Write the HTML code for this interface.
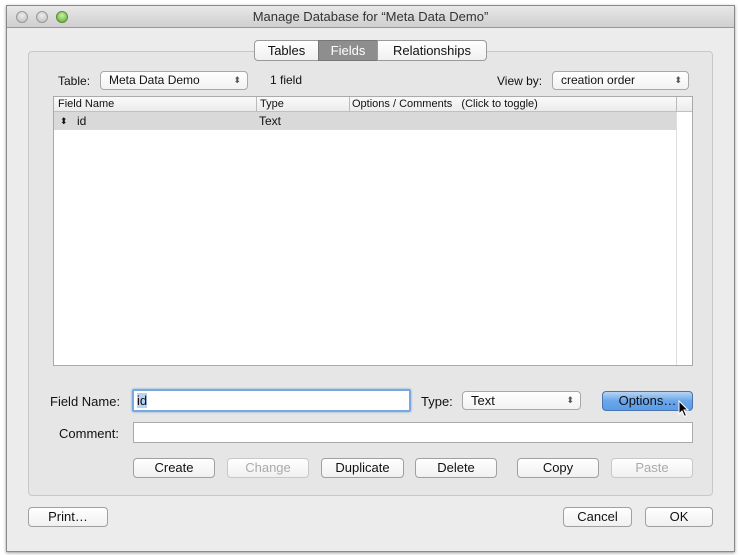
<!DOCTYPE html>
<html><head><style>
*{box-sizing:border-box;margin:0;padding:0}
body{width:740px;height:555px;background:#fff;font-family:"Liberation Sans",sans-serif;font-size:12px;color:#111;position:relative;overflow:hidden}
.a{position:absolute}
.win{left:6px;top:5px;width:729px;height:547px;border:1px solid #8a8a8a;background:#ececec;box-shadow:0 1px 3px rgba(0,0,0,.4)}
.title{left:7px;top:6px;width:727px;height:22px;background:linear-gradient(#e8e8e8,#cfcfcf);border-bottom:1px solid #999;text-align:center;line-height:22px;font-size:13px;color:#333}
.dot{width:12px;height:12px;border-radius:50%;top:11px;background:radial-gradient(circle at 50% 35%,#eee,#b8b8b8);border:1px solid #999}
.group{left:28px;top:51px;width:685px;height:445px;border:1px solid #c8c8c8;border-radius:4px;background:#e6e6e6}
.tab{top:40px;height:21px;border:1px solid #9a9a9a;background:linear-gradient(#fff,#f0f0f0);text-align:center;line-height:19px;font-size:13px}
.pop{height:19px;border:1px solid #a8a8a8;border-radius:4px;background:linear-gradient(#fff,#f2f2f2);padding-left:8px;line-height:17px;font-size:12px}
.pop:after{content:"⬍";position:absolute;right:6px;top:0;font-size:9px;color:#555}
.btn{height:20px;border:1px solid #a0a0a0;border-radius:4px;background:linear-gradient(#fff,#f0f0f0);text-align:center;line-height:18px;font-size:13px}
.dis{color:#aaa;border-color:#c8c8c8}
.inp{background:#fff;border:1px solid #aaa}
</style></head><body>
<div class="a win"></div>
<div class="a title">Manage Database for “Meta Data Demo”</div>
<div class="a dot" style="left:16px"></div>
<div class="a dot" style="left:36px"></div>
<div class="a dot" style="left:56px;background:radial-gradient(circle at 50% 35%,#c8f0a0,#5aaa30);border-color:#5a8a3a"></div>
<div class="a group"></div>
<div class="a tab" style="left:254px;width:65px;border-radius:4px 0 0 4px">Tables</div>
<div class="a tab" style="left:318px;width:60px;background:#8e8e8e;color:#fff;border-color:#777">Fields</div>
<div class="a tab" style="left:377px;width:110px;border-radius:0 4px 4px 0">Relationships</div>
<div class="a" style="left:58px;top:74px">Table:</div>
<div class="a pop" style="left:100px;top:71px;width:148px">Meta Data Demo</div>
<div class="a" style="left:270px;top:73px">1 field</div>
<div class="a" style="left:497px;top:74px">View by:</div>
<div class="a pop" style="left:552px;top:71px;width:137px">creation order</div>
<div class="a" style="left:53px;top:96px;width:640px;height:270px;background:#fff;border:1px solid #aaa"></div>
<div class="a" style="left:54px;top:97px;width:638px;height:15px;background:linear-gradient(#fafafa,#ececec);border-bottom:1px solid #c0c0c0;font-size:11px;line-height:14px">
<span class="a" style="left:4px">Field Name</span>
<span class="a" style="left:202px;border-left:1px solid #bbb;padding-left:3px;height:15px">Type</span>
<span class="a" style="left:295px;border-left:1px solid #bbb;padding-left:2px;height:15px">Options / Comments &nbsp; (Click to toggle)</span>
<span class="a" style="left:622px;border-left:1px solid #bbb;height:15px;width:1px"></span></div>
<div class="a" style="left:54px;top:112px;width:623px;height:18px;background:#d9d9d9;font-size:12px;line-height:18px">
<span class="a" style="left:6px;font-size:9px">⬍</span><span class="a" style="left:23px">id</span><span class="a" style="left:205px">Text</span></div>
<div class="a" style="left:676px;top:112px;width:1px;height:253px;background:#ddd"></div>
<div class="a" style="left:50px;top:394px;font-size:13px">Field Name:</div>
<div class="a inp" style="left:132px;top:389px;width:279px;height:23px;border:2px solid #7aa8dc;box-shadow:0 0 2px #7aa8dc;border-radius:2px;font-size:13px;line-height:19px;padding-left:3px"><span style="background:#b5d3f3">id</span></div>
<div class="a" style="left:421px;top:394px;font-size:13px">Type:</div>
<div class="a pop" style="left:462px;top:391px;width:119px;font-size:13px">Text</div>
<div class="a btn" style="left:602px;top:391px;width:91px;background:linear-gradient(#b7d5f6,#6aa6ea 50%,#5a9ce8);border-color:#4a74b0">Options…</div>
<svg class="a" style="left:678px;top:400px" width="12" height="18" viewBox="0 0 12 18"><path d="M1 1 L1 14 L4 11 L6.5 16.5 L8.5 15.5 L6 10 L10 10 Z" fill="#000" stroke="#fff" stroke-width="1"/></svg>
<div class="a" style="left:59px;top:426px;font-size:13px">Comment:</div>
<div class="a inp" style="left:133px;top:422px;width:560px;height:21px"></div>
<div class="a btn" style="left:133px;top:458px;width:82px">Create</div>
<div class="a btn dis" style="left:227px;top:458px;width:82px">Change</div>
<div class="a btn" style="left:321px;top:458px;width:83px">Duplicate</div>
<div class="a btn" style="left:415px;top:458px;width:82px">Delete</div>
<div class="a btn" style="left:517px;top:458px;width:82px">Copy</div>
<div class="a btn dis" style="left:611px;top:458px;width:82px">Paste</div>
<div class="a btn" style="left:28px;top:507px;width:80px">Print…</div>
<div class="a btn" style="left:563px;top:507px;width:69px">Cancel</div>
<div class="a btn" style="left:645px;top:507px;width:68px">OK</div>
</body></html>
